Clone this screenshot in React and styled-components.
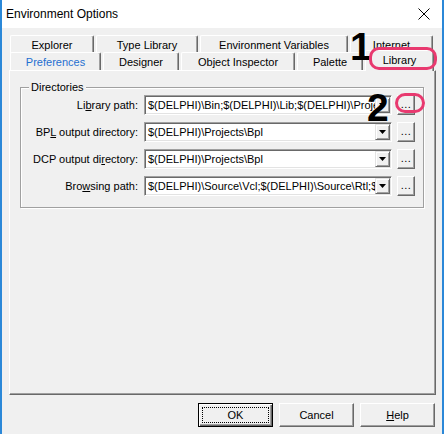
import React from 'react'
import styled, { createGlobalStyle } from 'styled-components'

const GlobalStyle = createGlobalStyle`
  body {
    margin: 0;
    font-family: 'Liberation Sans', Arial, sans-serif;
    background: #ffffff;
  }
`

const backTabs = [
  { label: 'Explorer', width: 84 },
  { label: 'Type Library', width: 102 },
  { label: 'Environment Variables', width: 148 },
  { label: 'Internet', width: 83 },
]

const frontTabs = [
  { label: 'Preferences', width: 91, hot: true },
  { label: 'Designer', width: 76 },
  { label: 'Object Inspector', width: 114 },
  { label: 'Palette', width: 66 },
  { label: 'Library', width: 69, active: true },
]

const dirs = [
  { label: 'Li', key: 'b', rest: 'rary path:', value: '$(DELPHI)\\Bin;$(DELPHI)\\Lib;$(DELPHI)\\Projects\\Bpl' },
  { label: 'BP', key: 'L', rest: ' output directory:', value: '$(DELPHI)\\Projects\\Bpl' },
  { label: 'DCP output di', key: 'r', rest: 'ectory:', value: '$(DELPHI)\\Projects\\Bpl' },
  { label: 'Bro', key: 'w', rest: 'sing path:', value: '$(DELPHI)\\Source\\Vcl;$(DELPHI)\\Source\\Rtl;$(DELPHI)\\Source' },
]

const App = () => {
  return (
    <>
      <GlobalStyle />
      <Window>
        <TitleBar>
          <Title>Environment Options</Title>
          <CloseIcon width='12' height='12' viewBox='0 0 12 12'>
            <path d='M0.5 0.5 L11.5 11.5 M11.5 0.5 L0.5 11.5' stroke='#000' strokeWidth='1' />
          </CloseIcon>
        </TitleBar>
        <Body>
          <TabStrip>
            <BackRow>
              {backTabs.map((t) => (
                <Tab key={t.label} $width={t.width}>{t.label}</Tab>
              ))}
            </BackRow>
            <FrontRow>
              {frontTabs.map((t) => (
                <Tab key={t.label} $width={t.width} $hot={t.hot} $active={t.active}>
                  {t.label}
                </Tab>
              ))}
            </FrontRow>
          </TabStrip>
          <Panel>
            <Group>
              <Legend>Directories</Legend>
              <Rows>
                {dirs.map((d) => (
                  <React.Fragment key={d.label}>
                    <Label>
                      {d.label}
                      <u>{d.key}</u>
                      {d.rest}
                    </Label>
                    <Combo>
                      <ComboText>{d.value}</ComboText>
                      <DropButton>
                        <svg width='7' height='4' viewBox='0 0 7 4'>
                          <path d='M0 0 H7 L3.5 4 Z' fill='#000' />
                        </svg>
                      </DropButton>
                    </Combo>
                    <EllipsisButton>...</EllipsisButton>
                  </React.Fragment>
                ))}
              </Rows>
            </Group>
          </Panel>
          <ButtonRow>
            <DialogButton $default>
              <FocusRect>OK</FocusRect>
            </DialogButton>
            <DialogButton>Cancel</DialogButton>
            <DialogButton>
              <u>H</u>elp
            </DialogButton>
          </ButtonRow>
        </Body>

        <Marker style={{ left: 348, top: 27 }}>1</Marker>
        <Marker style={{ left: 365, top: 88 }}>2</Marker>
        <Ring style={{ left: 367, top: 47, width: 68, height: 23 }} />
        <Ring style={{ left: 393, top: 93, width: 30, height: 20 }} />
      </Window>
    </>
  )
}

export default App

const Window = styled.div`
  position: relative;
  width: 444px;
  height: 434px;
  box-sizing: border-box;
  background: #f0f0f0;
  border-left: 2px solid #2b88d8;
  border-right: 2px solid #2b88d8;
  display: flex;
  flex-direction: column;
  overflow: hidden;
`

const TitleBar = styled.div`
  height: 28px;
  flex-shrink: 0;
  background: #ffffff;
  display: flex;
  align-items: center;
  justify-content: space-between;
  padding: 0 12px 0 4px;
`

const Title = styled.div`
  font-size: 12px;
  color: #000;
`

const CloseIcon = styled.svg`
  display: block;
`

const Body = styled.div`
  flex: 1;
  display: flex;
  flex-direction: column;
  padding: 7px 7px 7px 7px;
  font-size: 11px;
  color: #000;
`

const TabStrip = styled.div`
  display: flex;
  flex-direction: column;
  padding-left: 1px;
`

const BackRow = styled.div`
  display: flex;
  gap: 2px;
  height: 17px;
  margin-bottom: -2px;
  align-items: flex-start;
`

const FrontRow = styled.div`
  display: flex;
  gap: 2px;
  height: 21px;
  margin-bottom: -1px;
  align-items: flex-end;
  position: relative;
  z-index: 1;
`

const Tab = styled.div`
  box-sizing: border-box;
  width: ${(p) => p.$width}px;
  height: ${(p) => (p.$active ? 21 : 18)}px;
  margin-bottom: ${(p) => (p.$active ? 0 : 1)}px;
  padding-bottom: ${(p) => (p.$active ? 3 : 0)}px;
  background: #f0f0f0;
  border-top: 1px solid #ffffff;
  border-left: 1px solid #ffffff;
  border-right: 1px solid #696969;
  box-shadow: inset -1px 0 0 #a0a0a0;
  border-radius: 2px 2px 0 0;
  display: flex;
  align-items: center;
  justify-content: center;
  white-space: nowrap;
  color: ${(p) => (p.$hot ? '#1f6fd1' : '#000')};
`

const Panel = styled.div`
  box-sizing: border-box;
  height: 325px;
  border: 1px solid;
  border-color: #ffffff #696969 #696969 #ffffff;
  box-shadow: inset -1px -1px 0 #a0a0a0;
  padding: 10px 11px 0 10px;
  margin-right: -1px;
`

const Group = styled.fieldset`
  margin: 0;
  padding: 1px 6px 11px 0;
  border: 1px solid #a0a0a0;
  box-shadow: 1px 1px 0 #ffffff, inset 1px 1px 0 #ffffff;
`

const Legend = styled.legend`
  margin-left: 8px;
  padding: 0 2px;
  background: #f0f0f0;
  font-size: 11px;
  line-height: 13px;
`

const Rows = styled.div`
  display: grid;
  grid-template-columns: 118px 248px 18px;
  column-gap: 5px;
  row-gap: 7px;
  grid-auto-rows: 20px;
  align-items: center;
`

const Label = styled.div`
  text-align: right;
  padding-right: 1px;
  white-space: nowrap;
  u {
    text-decoration-thickness: 1px;
  }
`

const Combo = styled.div`
  box-sizing: border-box;
  height: 20px;
  display: flex;
  align-items: stretch;
  background: #ffffff;
  border: 1px solid;
  border-color: #a0a0a0 #ffffff #ffffff #a0a0a0;
  box-shadow: inset 1px 1px 0 #696969, inset -1px -1px 0 #e3e3e3;
  padding: 2px 1px 1px 2px;
`

const ComboText = styled.div`
  flex: 1;
  overflow: hidden;
  white-space: nowrap;
  line-height: 15px;
  padding-left: 1px;
`

const DropButton = styled.div`
  box-sizing: border-box;
  width: 15px;
  flex-shrink: 0;
  background: #f0f0f0;
  border: 1px solid;
  border-color: #e3e3e3 #696969 #696969 #e3e3e3;
  box-shadow: inset 1px 1px 0 #ffffff, inset -1px -1px 0 #a0a0a0;
  display: flex;
  align-items: center;
  justify-content: center;
  margin-top: -1px;
`

const EllipsisButton = styled.div`
  box-sizing: border-box;
  height: 20px;
  background: #f0f0f0;
  border: 1px solid;
  border-color: #ffffff #696969 #696969 #ffffff;
  box-shadow: inset -1px -1px 0 #a0a0a0;
  display: flex;
  align-items: center;
  justify-content: center;
  padding-bottom: 2px;
  letter-spacing: 0.5px;
`

const ButtonRow = styled.div`
  display: flex;
  justify-content: flex-end;
  gap: 6px;
  margin-top: 8px;
`

const DialogButton = styled.div`
  box-sizing: border-box;
  width: 75px;
  height: 24px;
  background: #f0f0f0;
  border: 1px solid;
  border-color: ${(p) => (p.$default ? '#000' : '#ffffff #696969 #696969 #ffffff')};
  box-shadow: ${(p) =>
    p.$default
      ? 'inset 1px 1px 0 #ffffff, inset -1px -1px 0 #696969, inset -2px -2px 0 #a0a0a0'
      : 'inset -1px -1px 0 #a0a0a0'};
  display: flex;
  align-items: center;
  justify-content: center;
  padding: 3px;
`

const FocusRect = styled.div`
  box-sizing: border-box;
  width: 100%;
  height: 100%;
  border: 1px dotted #000;
  display: flex;
  align-items: center;
  justify-content: center;
`

const Marker = styled.div`
  position: absolute;
  font-family: 'Liberation Sans', Arial, sans-serif;
  font-weight: 700;
  font-size: 39px;
  line-height: 39px;
  color: #000;
  z-index: 3;
`

const Ring = styled.div`
  position: absolute;
  box-sizing: border-box;
  border: 3px solid #e8396f;
  border-radius: 10px;
  z-index: 4;
`
